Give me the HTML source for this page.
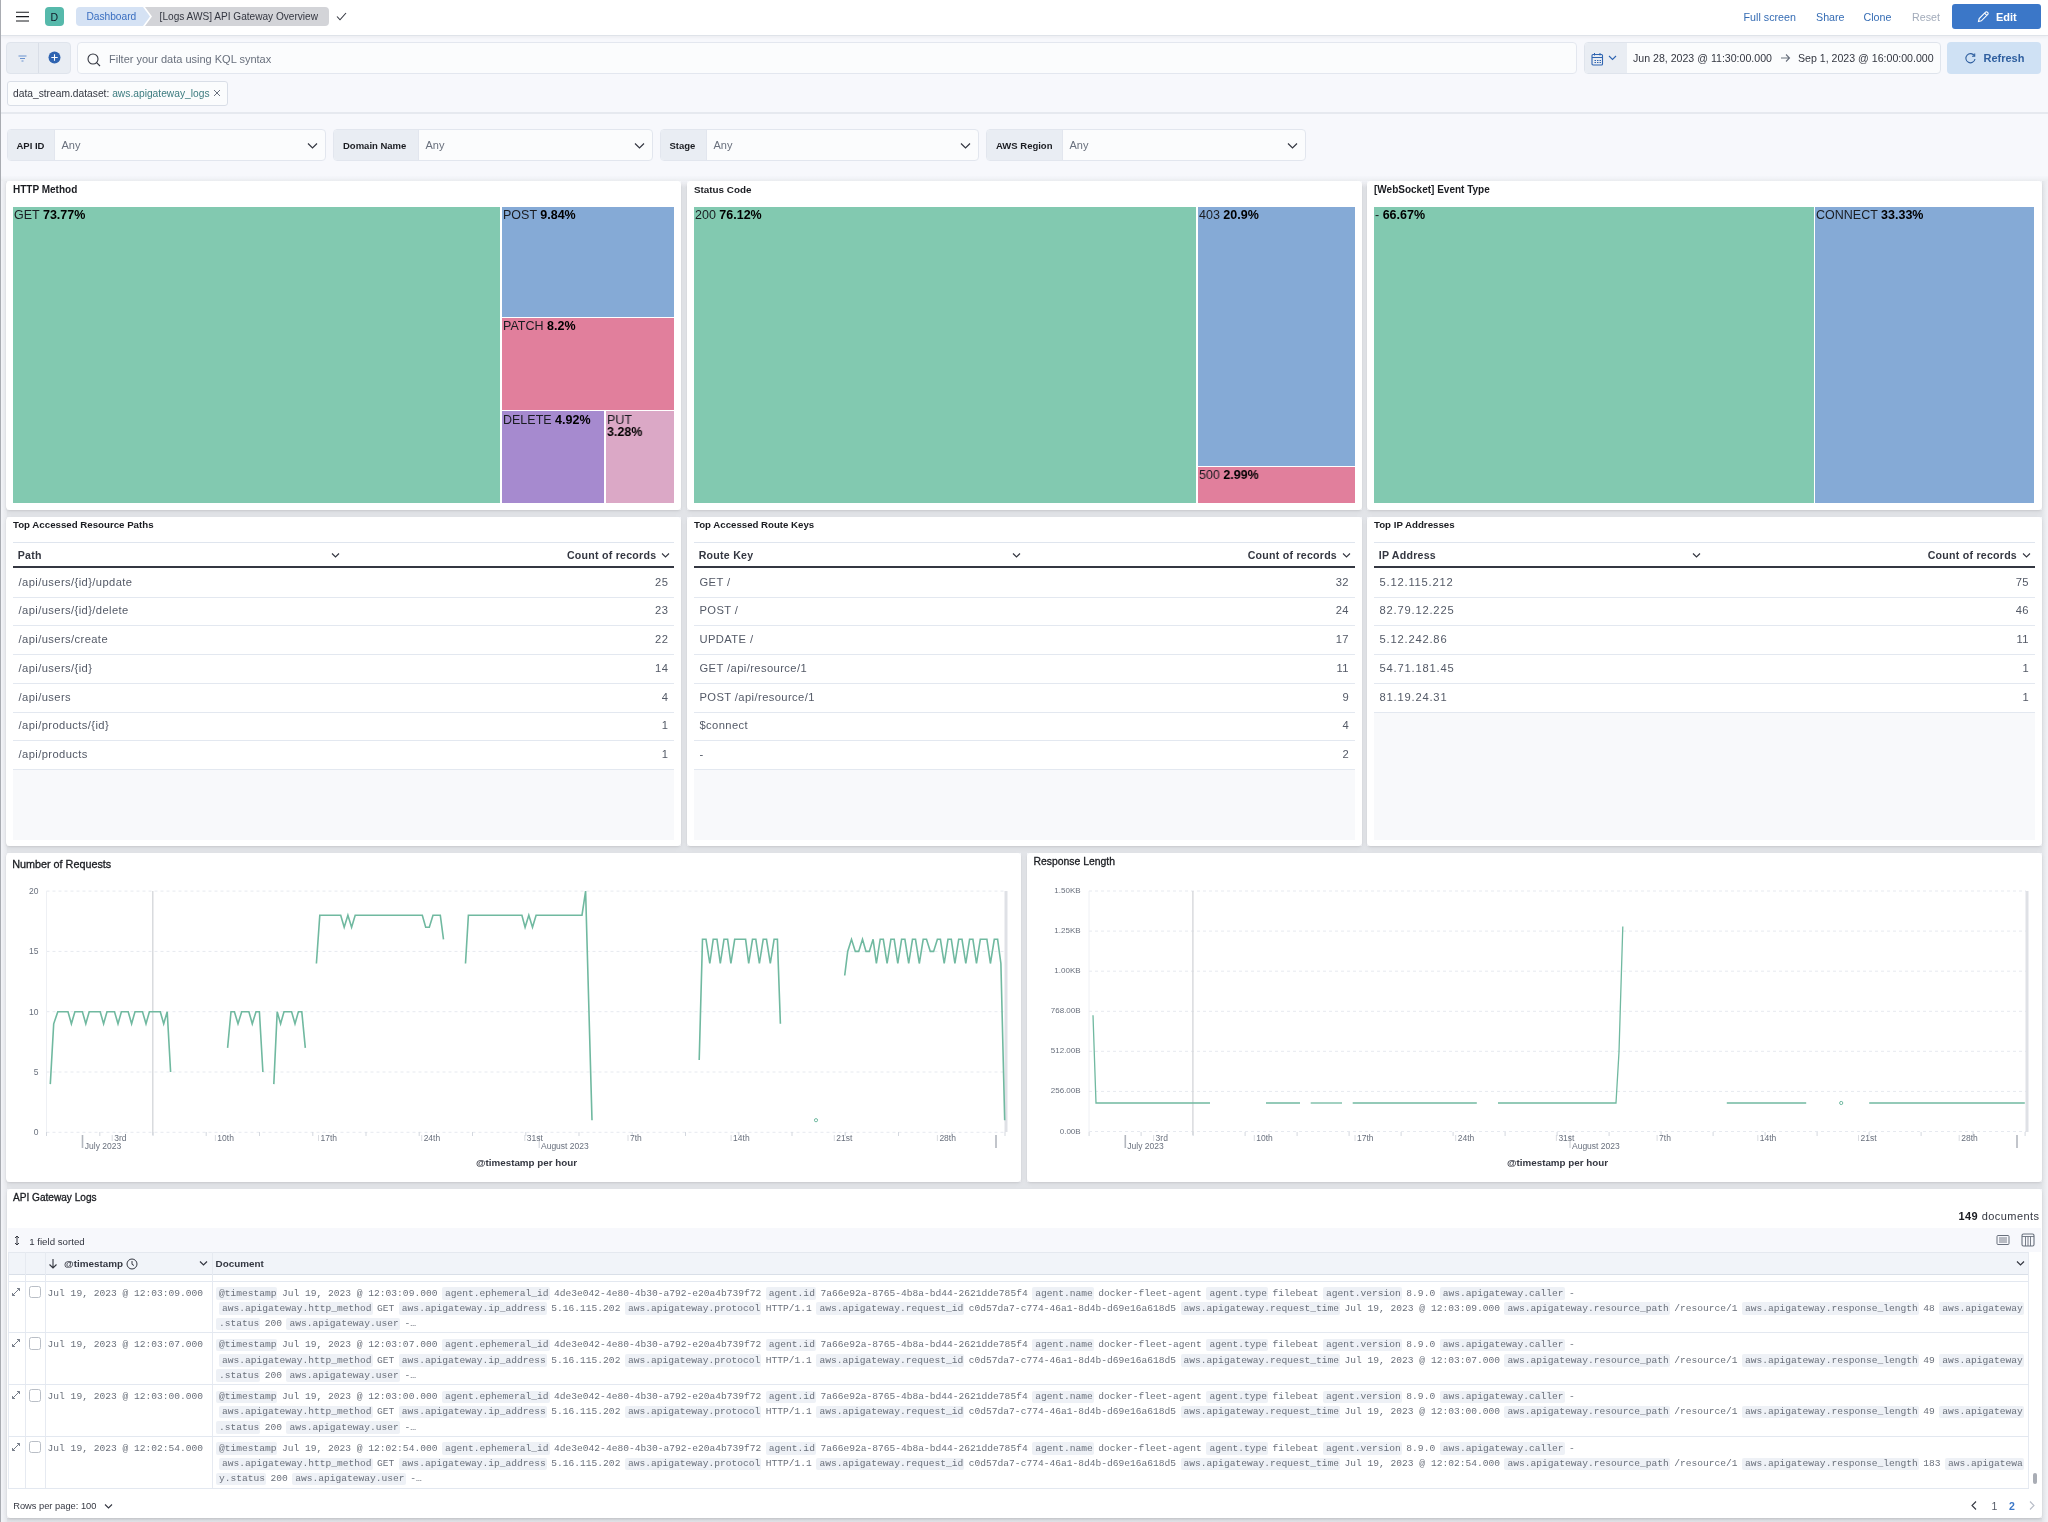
<!DOCTYPE html><html><head><meta charset="utf-8"><style>
*{box-sizing:border-box;margin:0;padding:0}
html,body{width:2048px;height:1522px;overflow:hidden;-webkit-font-smoothing:antialiased;background:#f7f8fc;font-family:"Liberation Sans",sans-serif;color:#343741}
.a{position:absolute}
.t{position:absolute;white-space:nowrap;line-height:1}
.lb{left:0;top:0;width:1px;height:1522px;background:#a9acb2;z-index:50}
.hdr{left:0;top:0;width:2048px;height:35px;background:#fff;box-shadow:0 1px 0 #dfe3e9,0 2px 4px rgba(0,0,0,.06)}
.panel{position:absolute;background:#fff;border-radius:4px;box-shadow:0 1px 2px rgba(0,0,0,.07),0 2px 5px rgba(0,0,0,.05)}
.ptitle{font-weight:bold;font-size:10px;color:#1a1c21}
.link{color:#356cb4;font-size:10.7px}
.ctl{position:absolute;top:129px;height:32px;border:1px solid #e2e6ee;border-radius:4px;background:#fbfcfd;overflow:hidden}
.ctl .lab{position:absolute;left:0;top:0;bottom:0;background:#e9edf3;border-right:1px solid #e2e6ee}
.ctl .lab span{position:absolute;top:10.8px;font-weight:bold;font-size:9.5px;color:#1a1c21;white-space:nowrap;line-height:1}
.ctl .any{position:absolute;top:9.5px;font-size:11px;color:#69707d;line-height:1}
.ctl svg{position:absolute;top:12px}
.tm{position:absolute;overflow:hidden}
.tm span{position:absolute;left:1px;top:2.4px;font-size:13.5px;color:#1a1c21;white-space:nowrap;line-height:12.3px;transform:scaleX(.926);transform-origin:0 0}
.tm b{font-weight:bold;color:#000}

.doc{position:absolute;left:215.9px;font-family:"Liberation Mono",monospace;font-size:9.6px;color:#6a707b;white-space:pre;line-height:1}
.doc span{display:inline-block;margin-right:4.5px;padding:1.5px 0 1.5px 0}
.doc span.f{background:#eef1f6;padding:1.5px 1px 1.5px 3px;border-radius:2px}
.ts{position:absolute;left:47.6px;font-family:"Liberation Mono",monospace;font-size:9.6px;color:#6a707b;white-space:pre;line-height:1}
</style></head><body><div style="position:absolute;left:0;top:0;width:2048px;height:1522px;will-change:transform"><div class="a lb"></div>
<div class="a hdr"></div>
<svg class="a" style="left:15px;top:10px" width="16" height="14" viewBox="0 0 16 14"><path d="M1 2.2H14M1 6.6H14M1 11H14" stroke="#1a1c21" stroke-width="1.1" fill="none"/></svg>
<div class="a" style="left:45px;top:7px;width:19px;height:19px;background:#56b9ab;border-radius:4px"></div>
<div class="t" style="left:50.5px;top:12px;font-size:10.5px;color:#111827">D</div>
<svg class="a" style="left:76px;top:7px" width="256" height="19" viewBox="0 0 256 19">
<path d="M4 0H67L74 9.5L67 19H4A4 4 0 0 1 0 15V4A4 4 0 0 1 4 0Z" fill="#d5e2f4"/>
<path d="M69 0H249A4 4 0 0 1 253 4V15A4 4 0 0 1 249 19H69L76 9.5Z" fill="#d3d4d8"/>
</svg>
<div class="t" style="left:86.4px;top:12px;font-size:10.2px;color:#3b6fc1">Dashboard</div>
<div class="t" style="left:159.6px;top:12px;font-size:10.1px;color:#343741">[Logs AWS] API Gateway Overview</div>
<svg class="a" style="left:336px;top:12px" width="11" height="9" viewBox="0 0 11 9"><path d="M1 4.5L4 7.8L10 1" stroke="#343741" stroke-width="1.1" fill="none"/></svg>
<div class="t link" style="left:1743.6px;top:12px">Full screen</div>
<div class="t link" style="left:1816px;top:12px">Share</div>
<div class="t link" style="left:1863.5px;top:12px">Clone</div>
<div class="t link" style="left:1912px;top:12px;color:#a2abba">Reset</div>
<div class="a" style="left:1952px;top:4px;width:89px;height:25px;background:#3b77c8;border-radius:3px"></div>
<svg class="a" style="left:1976px;top:10px" width="14" height="14" viewBox="0 0 14 14"><path d="M2.5 11.5L3.2 8.6L9.6 2.2A1.2 1.2 0 0 1 11.3 2.2L11.8 2.7A1.2 1.2 0 0 1 11.8 4.4L5.4 10.8Z M8.6 3.2L10.8 5.4" stroke="#fff" stroke-width="1.1" fill="none"/></svg>
<div class="t" style="left:1996px;top:12px;font-size:11px;font-weight:bold;color:#fff">Edit</div>

<div class="a" style="left:6px;top:42px;width:65px;height:32px;background:#e9edf3;border-radius:4px;border:1px solid #dfe4ec"></div>
<div class="a" style="left:38px;top:43px;width:1px;height:30px;background:#d9dee7"></div>
<svg class="a" style="left:17px;top:55px" width="11" height="8" viewBox="0 0 11 8"><path d="M1.5 1H9.5M3 3.5H8M4.5 6H6.5" stroke="#6b93cf" stroke-width="1.1" fill="none"/></svg>
<svg class="a" style="left:48px;top:51px" width="13" height="13" viewBox="0 0 13 13"><circle cx="6.5" cy="6.5" r="6" fill="#2f64b1"/><path d="M6.5 3.3V9.7M3.3 6.5H9.7" stroke="#fff" stroke-width="1.1"/></svg>
<div class="a" style="left:77px;top:42px;width:1500px;height:32px;background:#fbfcfd;border:1px solid #e3e7ef;border-radius:4px"></div>
<svg class="a" style="left:86px;top:52px" width="16" height="16" viewBox="0 0 16 16"><circle cx="7" cy="7" r="5" stroke="#343741" stroke-width="1.1" fill="none"/><path d="M10.6 10.6L14 14" stroke="#343741" stroke-width="1.1"/></svg>
<div class="t" style="left:109px;top:54px;font-size:11px;color:#69707d">Filter your data using KQL syntax</div>
<div class="a" style="left:1584px;top:42px;width:357px;height:32px;background:#fbfcfd;border:1px solid #dfe4ec;border-radius:4px;overflow:hidden"><div class="a" style="left:0;top:0;width:42px;height:30px;background:#e9edf3"></div></div>
<svg class="a" style="left:1591px;top:52px" width="13" height="14" viewBox="0 0 13 14"><rect x="1" y="2.5" width="10.5" height="10.5" rx="1" stroke="#2f64b1" stroke-width="1.1" fill="none"/><path d="M1 5.5H11.5M3.5 1V3.5M9 1V3.5M3.5 8.5H5M6 8.5H7.5M8.5 8.5H10M3.5 10.5H5M6 10.5H7.5M8.5 10.5H10" stroke="#2f64b1" stroke-width="1"/></svg>
<svg class="a" style="left:1608px;top:55px" width="9" height="6" viewBox="0 0 9 6"><path d="M1 1L4.5 4.5L8 1" stroke="#2f64b1" stroke-width="1.1" fill="none"/></svg>
<div class="t" style="left:1633px;top:52.5px;font-size:10.6px;color:#343741">Jun 28, 2023 @ 11:30:00.000</div>
<svg class="a" style="left:1780px;top:53px" width="11" height="10" viewBox="0 0 11 10"><path d="M1 5H9.5M6 1.5L9.5 5L6 8.5" stroke="#69707d" stroke-width="1.1" fill="none"/></svg>
<div class="t" style="left:1798px;top:52.5px;font-size:10.6px;color:#343741">Sep 1, 2023 @ 16:00:00.000</div>
<div class="a" style="left:1947px;top:42px;width:94px;height:32px;background:#cfe1f4;border-radius:4px"></div>
<svg class="a" style="left:1964px;top:52px" width="13" height="13" viewBox="0 0 13 13"><path d="M10.5 4A4.6 4.6 0 1 0 11 7" stroke="#2f5f9f" stroke-width="1.1" fill="none"/><path d="M10.7 1.5V4.3H8" stroke="#2f5f9f" stroke-width="1.1" fill="none"/></svg>
<div class="t" style="left:1983.5px;top:53px;font-size:11px;font-weight:bold;color:#2f5f9f">Refresh</div>
<div class="a" style="left:7px;top:81px;width:221px;height:25px;background:#fbfcfd;border:1px solid #d9dee7;border-radius:3px"></div>
<div class="t" style="left:13px;top:88.7px;font-size:10.25px;color:#343741">data_stream.dataset: <span style="color:#3d7c80">aws.apigateway_logs</span></div>
<svg class="a" style="left:213px;top:89px" width="8" height="8" viewBox="0 0 8 8"><path d="M1 1L7 7M7 1L1 7" stroke="#69707d" stroke-width="1"/></svg>
<div class="a" style="left:1px;top:112px;width:2047px;height:2px;background:#e6e9ef"></div>
<div class="ctl" style="left:6.5px;width:319.5px"><div class="lab" style="width:47.5px"><span style="left:9px">API ID</span></div><div class="any" style="left:54.0px">Any</div><svg style="left:299.5px" width="11" height="8" viewBox="0 0 11 8"><path d="M1 1.5L5.5 6L10 1.5" stroke="#343741" stroke-width="1.2" fill="none"/></svg></div><div class="ctl" style="left:333px;width:319.5px"><div class="lab" style="width:85px"><span style="left:9px">Domain Name</span></div><div class="any" style="left:91.5px">Any</div><svg style="left:299.5px" width="11" height="8" viewBox="0 0 11 8"><path d="M1 1.5L5.5 6L10 1.5" stroke="#343741" stroke-width="1.2" fill="none"/></svg></div><div class="ctl" style="left:659.5px;width:319.5px"><div class="lab" style="width:46.5px"><span style="left:9px">Stage</span></div><div class="any" style="left:53.0px">Any</div><svg style="left:299.5px" width="11" height="8" viewBox="0 0 11 8"><path d="M1 1.5L5.5 6L10 1.5" stroke="#343741" stroke-width="1.2" fill="none"/></svg></div><div class="ctl" style="left:986px;width:319.5px"><div class="lab" style="width:76px"><span style="left:9px">AWS Region</span></div><div class="any" style="left:82.5px">Any</div><svg style="left:299.5px" width="11" height="8" viewBox="0 0 11 8"><path d="M1 1.5L5.5 6L10 1.5" stroke="#343741" stroke-width="1.2" fill="none"/></svg></div><div class="a" style="left:6px;top:510px;width:2035.5px;height:7px;background:#e2e4e8"></div><div class="a" style="left:6px;top:846px;width:2035.5px;height:7px;background:#e2e4e8"></div><div class="a" style="left:6.5px;top:1182px;width:2035.0px;height:7px;background:#e2e4e8"></div><div class="a" style="left:680.5px;top:187px;width:6.5px;height:659px;background:#e2e4e8"></div><div class="a" style="left:1361.5px;top:187px;width:5.5px;height:659px;background:#e2e4e8"></div><div class="a" style="left:1021px;top:853px;width:6px;height:329px;background:#e2e4e8"></div><div class="a" style="left:680.5px;top:179px;width:6.5px;height:8px;background:linear-gradient(rgba(226,228,232,0),#e2e4e8)"></div><div class="a" style="left:1361.5px;top:179px;width:5.5px;height:8px;background:linear-gradient(rgba(226,228,232,0),#e2e4e8)"></div><div class="a" style="left:1px;top:176px;width:2047px;height:5px;background:linear-gradient(rgba(236,238,242,0),#eceef2)"></div><div class="a" style="left:1px;top:1517.5px;width:2047px;height:5px;background:linear-gradient(#d9dbe0,#e4e6ea)"></div><div class="a" style="left:2041.5px;top:181px;width:6.5px;height:1341px;background:linear-gradient(90deg,#e3e5e9,#f1f2f6)"></div><div class="a" style="left:1px;top:181px;width:5.5px;height:1341px;background:linear-gradient(90deg,#f3f4f8,#e6e8ec)"></div><div class="panel" style="left:6px;top:181px;width:674.5px;height:329px"></div><div class="panel" style="left:687px;top:181px;width:674.5px;height:329px"></div><div class="panel" style="left:1367px;top:181px;width:674.5px;height:329px"></div><div class="panel" style="left:6px;top:517px;width:674.5px;height:329px"></div><div class="panel" style="left:687px;top:517px;width:674.5px;height:329px"></div><div class="panel" style="left:1367px;top:517px;width:674.5px;height:329px"></div><div class="panel" style="left:6px;top:853px;width:1015px;height:329px"></div><div class="panel" style="left:1027px;top:853px;width:1014.5px;height:329px"></div><div class="panel" style="left:6.5px;top:1189px;width:2035.0px;height:328.5px"></div><div class="t ptitle" style="left:13px;top:185px">HTTP Method</div><div class="t ptitle" style="left:694px;top:185px;font-size:9.86px">Status Code</div><div class="t ptitle" style="left:1374px;top:185px">[WebSocket] Event Type</div><div class="t ptitle" style="left:13px;top:520.4px;font-size:9.7px">Top Accessed Resource Paths</div><div class="t ptitle" style="left:694px;top:520.4px;font-size:9.66px">Top Accessed Route Keys</div><div class="t ptitle" style="left:1374px;top:520.4px;font-size:9.7px">Top IP Addresses</div><div class="tm" style="left:13px;top:207px;width:486.7px;height:296px;background:#82c9b0"><span>GET <b>73.77%</b></span></div><div class="tm" style="left:501.6px;top:207px;width:172.39999999999998px;height:109.80000000000001px;background:#85aad6"><span>POST <b>9.84%</b></span></div><div class="tm" style="left:501.6px;top:318px;width:172.39999999999998px;height:91.60000000000002px;background:#e17f9c"><span>PATCH <b>8.2%</b></span></div><div class="tm" style="left:501.6px;top:411.3px;width:102.19999999999993px;height:91.69999999999999px;background:#a68acf"><span>DELETE <b>4.92%</b></span></div><div class="tm" style="left:605.9px;top:411.3px;width:68.10000000000002px;height:91.69999999999999px;background:#dba8c6"><span>PUT<br><b>3.28%</b></span></div><div class="tm" style="left:694px;top:207px;width:502px;height:296px;background:#82c9b0"><span>200 <b>76.12%</b></span></div><div class="tm" style="left:1198px;top:207px;width:157px;height:258.5px;background:#85aad6"><span>403 <b>20.9%</b></span></div><div class="tm" style="left:1198px;top:467px;width:157px;height:36px;background:#e17f9c"><span>500 <b>2.99%</b></span></div><div class="tm" style="left:1374px;top:207px;width:439.79999999999995px;height:296px;background:#82c9b0"><span>- <b>66.67%</b></span></div><div class="tm" style="left:1815px;top:207px;width:219.29999999999995px;height:296px;background:#85aad6"><span>CONNECT <b>33.33%</b></span></div><div class="a" style="left:13px;top:542px;width:661.3px;height:1px;background:#dfe5ee"></div><div class="t" style="left:17.7px;top:550px;font-size:10.6px;font-weight:bold;color:#343741;letter-spacing:.25px">Path</div><svg class="a" style="left:331px;top:552px" width="9" height="7" viewBox="0 0 9 7"><path d="M1 1.5L4.5 5L8 1.5" stroke="#343741" stroke-width="1.2" fill="none"/></svg><div class="t" style="right:1391.7px;top:550px;font-size:10.6px;font-weight:bold;color:#343741;letter-spacing:.25px">Count of records</div><svg class="a" style="left:661.3px;top:552px" width="9" height="7" viewBox="0 0 9 7"><path d="M1 1.5L4.5 5L8 1.5" stroke="#343741" stroke-width="1.1" fill="none"/></svg><div class="a" style="left:13px;top:565.8px;width:661.3px;height:2px;background:#343741"></div><div class="t" style="left:18.5px;top:576.5px;font-size:11.2px;color:#535966;letter-spacing:0.4px">/api/users/{id}/update</div><div class="t" style="right:1379.7px;top:576.5px;font-size:11.2px;color:#535966;letter-spacing:.4px">25</div><div class="a" style="left:13px;top:596.5px;width:661.3px;height:1px;background:#e3e8f0"></div><div class="t" style="left:18.5px;top:605.2px;font-size:11.2px;color:#535966;letter-spacing:0.4px">/api/users/{id}/delete</div><div class="t" style="right:1379.7px;top:605.2px;font-size:11.2px;color:#535966;letter-spacing:.4px">23</div><div class="a" style="left:13px;top:625.2px;width:661.3px;height:1px;background:#e3e8f0"></div><div class="t" style="left:18.5px;top:634.0px;font-size:11.2px;color:#535966;letter-spacing:0.4px">/api/users/create</div><div class="t" style="right:1379.7px;top:634.0px;font-size:11.2px;color:#535966;letter-spacing:.4px">22</div><div class="a" style="left:13px;top:654.0px;width:661.3px;height:1px;background:#e3e8f0"></div><div class="t" style="left:18.5px;top:662.8px;font-size:11.2px;color:#535966;letter-spacing:0.4px">/api/users/{id}</div><div class="t" style="right:1379.7px;top:662.8px;font-size:11.2px;color:#535966;letter-spacing:.4px">14</div><div class="a" style="left:13px;top:682.8px;width:661.3px;height:1px;background:#e3e8f0"></div><div class="t" style="left:18.5px;top:691.5px;font-size:11.2px;color:#535966;letter-spacing:0.4px">/api/users</div><div class="t" style="right:1379.7px;top:691.5px;font-size:11.2px;color:#535966;letter-spacing:.4px">4</div><div class="a" style="left:13px;top:711.5px;width:661.3px;height:1px;background:#e3e8f0"></div><div class="t" style="left:18.5px;top:720.2px;font-size:11.2px;color:#535966;letter-spacing:0.4px">/api/products/{id}</div><div class="t" style="right:1379.7px;top:720.2px;font-size:11.2px;color:#535966;letter-spacing:.4px">1</div><div class="a" style="left:13px;top:740.2px;width:661.3px;height:1px;background:#e3e8f0"></div><div class="t" style="left:18.5px;top:749.0px;font-size:11.2px;color:#535966;letter-spacing:0.4px">/api/products</div><div class="t" style="right:1379.7px;top:749.0px;font-size:11.2px;color:#535966;letter-spacing:.4px">1</div><div class="a" style="left:13px;top:769.0px;width:661.3px;height:1px;background:#e3e8f0"></div><div class="a" style="left:13px;top:770.0px;width:661.3px;height:69.8px;background:#f8f9fb"></div><div class="a" style="left:694px;top:542px;width:661px;height:1px;background:#dfe5ee"></div><div class="t" style="left:698.7px;top:550px;font-size:10.6px;font-weight:bold;color:#343741;letter-spacing:.25px">Route Key</div><svg class="a" style="left:1012px;top:552px" width="9" height="7" viewBox="0 0 9 7"><path d="M1 1.5L4.5 5L8 1.5" stroke="#343741" stroke-width="1.2" fill="none"/></svg><div class="t" style="right:711px;top:550px;font-size:10.6px;font-weight:bold;color:#343741;letter-spacing:.25px">Count of records</div><svg class="a" style="left:1342px;top:552px" width="9" height="7" viewBox="0 0 9 7"><path d="M1 1.5L4.5 5L8 1.5" stroke="#343741" stroke-width="1.1" fill="none"/></svg><div class="a" style="left:694px;top:565.8px;width:661px;height:2px;background:#343741"></div><div class="t" style="left:699.5px;top:576.5px;font-size:11.2px;color:#535966;letter-spacing:0.4px">GET /</div><div class="t" style="right:699px;top:576.5px;font-size:11.2px;color:#535966;letter-spacing:.4px">32</div><div class="a" style="left:694px;top:596.5px;width:661px;height:1px;background:#e3e8f0"></div><div class="t" style="left:699.5px;top:605.2px;font-size:11.2px;color:#535966;letter-spacing:0.4px">POST /</div><div class="t" style="right:699px;top:605.2px;font-size:11.2px;color:#535966;letter-spacing:.4px">24</div><div class="a" style="left:694px;top:625.2px;width:661px;height:1px;background:#e3e8f0"></div><div class="t" style="left:699.5px;top:634.0px;font-size:11.2px;color:#535966;letter-spacing:0.4px">UPDATE /</div><div class="t" style="right:699px;top:634.0px;font-size:11.2px;color:#535966;letter-spacing:.4px">17</div><div class="a" style="left:694px;top:654.0px;width:661px;height:1px;background:#e3e8f0"></div><div class="t" style="left:699.5px;top:662.8px;font-size:11.2px;color:#535966;letter-spacing:0.4px">GET /api/resource/1</div><div class="t" style="right:699px;top:662.8px;font-size:11.2px;color:#535966;letter-spacing:.4px">11</div><div class="a" style="left:694px;top:682.8px;width:661px;height:1px;background:#e3e8f0"></div><div class="t" style="left:699.5px;top:691.5px;font-size:11.2px;color:#535966;letter-spacing:0.4px">POST /api/resource/1</div><div class="t" style="right:699px;top:691.5px;font-size:11.2px;color:#535966;letter-spacing:.4px">9</div><div class="a" style="left:694px;top:711.5px;width:661px;height:1px;background:#e3e8f0"></div><div class="t" style="left:699.5px;top:720.2px;font-size:11.2px;color:#535966;letter-spacing:0.4px">$connect</div><div class="t" style="right:699px;top:720.2px;font-size:11.2px;color:#535966;letter-spacing:.4px">4</div><div class="a" style="left:694px;top:740.2px;width:661px;height:1px;background:#e3e8f0"></div><div class="t" style="left:699.5px;top:749.0px;font-size:11.2px;color:#535966;letter-spacing:0.4px">-</div><div class="t" style="right:699px;top:749.0px;font-size:11.2px;color:#535966;letter-spacing:.4px">2</div><div class="a" style="left:694px;top:769.0px;width:661px;height:1px;background:#e3e8f0"></div><div class="a" style="left:694px;top:770.0px;width:661px;height:69.8px;background:#f8f9fb"></div><div class="a" style="left:1374px;top:542px;width:661px;height:1px;background:#dfe5ee"></div><div class="t" style="left:1378.7px;top:550px;font-size:10.6px;font-weight:bold;color:#343741;letter-spacing:.25px">IP Address</div><svg class="a" style="left:1692px;top:552px" width="9" height="7" viewBox="0 0 9 7"><path d="M1 1.5L4.5 5L8 1.5" stroke="#343741" stroke-width="1.2" fill="none"/></svg><div class="t" style="right:31px;top:550px;font-size:10.6px;font-weight:bold;color:#343741;letter-spacing:.25px">Count of records</div><svg class="a" style="left:2022px;top:552px" width="9" height="7" viewBox="0 0 9 7"><path d="M1 1.5L4.5 5L8 1.5" stroke="#343741" stroke-width="1.1" fill="none"/></svg><div class="a" style="left:1374px;top:565.8px;width:661px;height:2px;background:#343741"></div><div class="t" style="left:1379.5px;top:576.5px;font-size:11.2px;color:#535966;letter-spacing:0.8px">5.12.115.212</div><div class="t" style="right:19px;top:576.5px;font-size:11.2px;color:#535966;letter-spacing:.4px">75</div><div class="a" style="left:1374px;top:596.5px;width:661px;height:1px;background:#e3e8f0"></div><div class="t" style="left:1379.5px;top:605.2px;font-size:11.2px;color:#535966;letter-spacing:0.8px">82.79.12.225</div><div class="t" style="right:19px;top:605.2px;font-size:11.2px;color:#535966;letter-spacing:.4px">46</div><div class="a" style="left:1374px;top:625.2px;width:661px;height:1px;background:#e3e8f0"></div><div class="t" style="left:1379.5px;top:634.0px;font-size:11.2px;color:#535966;letter-spacing:0.8px">5.12.242.86</div><div class="t" style="right:19px;top:634.0px;font-size:11.2px;color:#535966;letter-spacing:.4px">11</div><div class="a" style="left:1374px;top:654.0px;width:661px;height:1px;background:#e3e8f0"></div><div class="t" style="left:1379.5px;top:662.8px;font-size:11.2px;color:#535966;letter-spacing:0.8px">54.71.181.45</div><div class="t" style="right:19px;top:662.8px;font-size:11.2px;color:#535966;letter-spacing:.4px">1</div><div class="a" style="left:1374px;top:682.8px;width:661px;height:1px;background:#e3e8f0"></div><div class="t" style="left:1379.5px;top:691.5px;font-size:11.2px;color:#535966;letter-spacing:0.8px">81.19.24.31</div><div class="t" style="right:19px;top:691.5px;font-size:11.2px;color:#535966;letter-spacing:.4px">1</div><div class="a" style="left:1374px;top:711.5px;width:661px;height:1px;background:#e3e8f0"></div><div class="a" style="left:1374px;top:712.5px;width:661px;height:127.3px;background:#f8f9fb"></div><svg class="a" style="left:0;top:0" width="2048" height="1522" viewBox="0 0 2048 1522"><line x1="46.5" y1="891.1" x2="1005" y2="891.1" stroke="#e6e9ef" stroke-width="1" stroke-dasharray="3,3"/><line x1="46.5" y1="951.4" x2="1005" y2="951.4" stroke="#e6e9ef" stroke-width="1" stroke-dasharray="3,3"/><line x1="46.5" y1="1011.7" x2="1005" y2="1011.7" stroke="#e6e9ef" stroke-width="1" stroke-dasharray="3,3"/><line x1="46.5" y1="1072.0" x2="1005" y2="1072.0" stroke="#e6e9ef" stroke-width="1" stroke-dasharray="3,3"/><line x1="46.5" y1="1132.3" x2="1005" y2="1132.3" stroke="#e6e9ef" stroke-width="1" stroke-dasharray="3,3"/><line x1="46.5" y1="891" x2="46.5" y2="1132" stroke="#eef0f4" stroke-width="1"/><line x1="152.8" y1="891" x2="152.8" y2="1135" stroke="#d3d5d9" stroke-width="1.3"/><line x1="1006" y1="891" x2="1006" y2="1132" stroke="#dfe1e6" stroke-width="3"/><polyline points="50.3,1084.1 53.7,1023.8 57.8,1011.7 68.0,1011.7 71.4,1023.8 74.9,1011.7 82.4,1011.7 85.8,1023.8 89.2,1011.7 100.2,1011.7 103.6,1023.8 107.0,1011.7 114.5,1011.7 118.0,1023.8 121.4,1011.7 128.2,1011.7 131.6,1023.8 135.0,1011.7 142.5,1011.7 146.0,1023.8 149.4,1011.7 160.3,1011.7 163.7,1023.8 167.2,1011.7 170.6,1072.0" fill="none" stroke="#70b9a0" stroke-width="1.6" stroke-linejoin="miter"/><polyline points="227.6,1047.9 231.0,1011.7 234.4,1011.7 238.0,1023.8 241.7,1011.7 248.9,1011.7 252.3,1023.8 256.0,1011.7 259.4,1011.7 262.9,1072.0" fill="none" stroke="#70b9a0" stroke-width="1.6" stroke-linejoin="miter"/><polyline points="273.8,1084.1 277.2,1011.7 280.6,1023.8 284.0,1011.7 291.6,1011.7 295.0,1023.8 298.4,1011.7 301.8,1011.7 305.3,1047.9" fill="none" stroke="#70b9a0" stroke-width="1.6" stroke-linejoin="miter"/><polyline points="316.4,963.5 319.8,915.2 340.7,915.2 344.2,927.3 347.9,915.2 351.6,927.3 355.2,915.2 422.3,915.2 425.7,927.3 429.3,927.3 433.0,915.2 440.3,915.2 443.5,939.3" fill="none" stroke="#70b9a0" stroke-width="1.6" stroke-linejoin="miter"/><polyline points="465.5,963.5 468.4,915.2 521.9,915.2 525.1,927.3 528.8,915.2 532.5,927.3 536.1,915.2 582.0,915.2 585.6,891.1 592.0,1120.2" fill="none" stroke="#70b9a0" stroke-width="1.6" stroke-linejoin="miter"/><polyline points="699.2,1059.9 702.5,939.3 706.0,939.3 709.8,963.5 713.2,939.3 717.0,939.3 720.3,963.5 724.0,939.3 727.6,939.3 730.9,963.5 734.7,939.3 745.6,939.3 748.7,963.5 752.5,939.3 755.8,939.3 759.4,963.5 763.2,939.3 766.5,939.3 770.3,963.5 774.1,939.3 777.4,939.3 780.4,1023.8" fill="none" stroke="#70b9a0" stroke-width="1.6" stroke-linejoin="miter"/><polyline points="844.7,975.5 847.7,951.4 851.5,939.3 855.3,951.4 858.7,951.4 862.5,939.3 866.0,951.4 869.3,951.4 873.1,939.3 876.4,963.5 880.2,939.3 883.3,939.3 887.1,963.5 890.9,939.3 894.2,939.3 897.8,963.5 901.6,939.3 904.9,939.3 908.7,963.5 912.5,939.3 915.5,939.3 919.3,963.5 923.2,939.3 926.5,939.3 930.3,951.4 933.6,951.4 937.4,939.3 940.4,939.3 944.2,963.5 948.0,939.3 951.3,939.3 954.9,963.5 958.7,939.3 962.0,939.3 965.8,963.5 969.6,939.3 972.9,939.3 976.5,963.5 980.3,939.3 986.9,939.3 990.4,963.5 994.3,939.3 997.6,939.3 1000.9,963.5 1004.7,1120.2" fill="none" stroke="#70b9a0" stroke-width="1.6" stroke-linejoin="miter"/><circle cx="816" cy="1120.2" r="1.6" fill="#fff" stroke="#70b9a0" stroke-width="1"/><line x1="112.2" y1="1135" x2="112.2" y2="1141" stroke="#d0d3d9" stroke-width="0.8"/><line x1="215.4" y1="1135" x2="215.4" y2="1141" stroke="#d0d3d9" stroke-width="0.8"/><line x1="318.5" y1="1135" x2="318.5" y2="1141" stroke="#d0d3d9" stroke-width="0.8"/><line x1="421.7" y1="1135" x2="421.7" y2="1141" stroke="#d0d3d9" stroke-width="0.8"/><line x1="524.8" y1="1135" x2="524.8" y2="1141" stroke="#d0d3d9" stroke-width="0.8"/><line x1="628.0" y1="1135" x2="628.0" y2="1141" stroke="#d0d3d9" stroke-width="0.8"/><line x1="731.1" y1="1135" x2="731.1" y2="1141" stroke="#d0d3d9" stroke-width="0.8"/><line x1="834.3" y1="1135" x2="834.3" y2="1141" stroke="#d0d3d9" stroke-width="0.8"/><line x1="937.4" y1="1135" x2="937.4" y2="1141" stroke="#d0d3d9" stroke-width="0.8"/><line x1="46.5" y1="1132" x2="46.5" y2="1136" stroke="#d3d7de" stroke-width="1"/><line x1="99.8" y1="1132" x2="99.8" y2="1136" stroke="#d3d7de" stroke-width="1"/><line x1="153.0" y1="1132" x2="153.0" y2="1136" stroke="#d3d7de" stroke-width="1"/><line x1="206.2" y1="1132" x2="206.2" y2="1136" stroke="#d3d7de" stroke-width="1"/><line x1="259.5" y1="1132" x2="259.5" y2="1136" stroke="#d3d7de" stroke-width="1"/><line x1="312.8" y1="1132" x2="312.8" y2="1136" stroke="#d3d7de" stroke-width="1"/><line x1="366.0" y1="1132" x2="366.0" y2="1136" stroke="#d3d7de" stroke-width="1"/><line x1="419.2" y1="1132" x2="419.2" y2="1136" stroke="#d3d7de" stroke-width="1"/><line x1="472.5" y1="1132" x2="472.5" y2="1136" stroke="#d3d7de" stroke-width="1"/><line x1="525.8" y1="1132" x2="525.8" y2="1136" stroke="#d3d7de" stroke-width="1"/><line x1="579.0" y1="1132" x2="579.0" y2="1136" stroke="#d3d7de" stroke-width="1"/><line x1="632.2" y1="1132" x2="632.2" y2="1136" stroke="#d3d7de" stroke-width="1"/><line x1="685.5" y1="1132" x2="685.5" y2="1136" stroke="#d3d7de" stroke-width="1"/><line x1="738.8" y1="1132" x2="738.8" y2="1136" stroke="#d3d7de" stroke-width="1"/><line x1="792.0" y1="1132" x2="792.0" y2="1136" stroke="#d3d7de" stroke-width="1"/><line x1="845.2" y1="1132" x2="845.2" y2="1136" stroke="#d3d7de" stroke-width="1"/><line x1="898.5" y1="1132" x2="898.5" y2="1136" stroke="#d3d7de" stroke-width="1"/><line x1="951.8" y1="1132" x2="951.8" y2="1136" stroke="#d3d7de" stroke-width="1"/><line x1="1005.0" y1="1132" x2="1005.0" y2="1136" stroke="#d3d7de" stroke-width="1"/><line x1="82.5" y1="1135" x2="82.5" y2="1148" stroke="#b3b7be" stroke-width="1.6"/><line x1="539.2" y1="1135" x2="539.2" y2="1148" stroke="#c4c8cf" stroke-width="0.8"/><line x1="996" y1="1135" x2="996" y2="1148" stroke="#b3b7be" stroke-width="1.6"/><line x1="1089" y1="1131.5" x2="2026" y2="1131.5" stroke="#e6e9ef" stroke-width="1" stroke-dasharray="3,3"/><line x1="1089" y1="1091.4" x2="2026" y2="1091.4" stroke="#e6e9ef" stroke-width="1" stroke-dasharray="3,3"/><line x1="1089" y1="1051.3" x2="2026" y2="1051.3" stroke="#e6e9ef" stroke-width="1" stroke-dasharray="3,3"/><line x1="1089" y1="1011.3" x2="2026" y2="1011.3" stroke="#e6e9ef" stroke-width="1" stroke-dasharray="3,3"/><line x1="1089" y1="971.2" x2="2026" y2="971.2" stroke="#e6e9ef" stroke-width="1" stroke-dasharray="3,3"/><line x1="1089" y1="931.1" x2="2026" y2="931.1" stroke="#e6e9ef" stroke-width="1" stroke-dasharray="3,3"/><line x1="1089" y1="891.0" x2="2026" y2="891.0" stroke="#e6e9ef" stroke-width="1" stroke-dasharray="3,3"/><line x1="1089" y1="891" x2="1089" y2="1132" stroke="#eef0f4" stroke-width="1"/><line x1="1192.9" y1="891" x2="1192.9" y2="1135" stroke="#d3d5d9" stroke-width="1.3"/><line x1="2027" y1="891" x2="2027" y2="1132" stroke="#dfe1e6" stroke-width="3"/><polyline points="1093.0,1015.2 1096.0,1103.0 1210.0,1103.0" fill="none" stroke="#70b9a0" stroke-width="1.3"/><polyline points="1266.0,1103.0 1300.0,1103.0" fill="none" stroke="#70b9a0" stroke-width="1.3"/><polyline points="1310.7,1103.0 1342.0,1103.0" fill="none" stroke="#70b9a0" stroke-width="1.3"/><polyline points="1352.7,1103.0 1476.8,1103.0" fill="none" stroke="#70b9a0" stroke-width="1.3"/><polyline points="1498.0,1103.0 1616.0,1103.0 1619.0,1052.0 1622.8,926.4" fill="none" stroke="#70b9a0" stroke-width="1.3"/><polyline points="1726.8,1103.0 1806.2,1103.0" fill="none" stroke="#70b9a0" stroke-width="1.3"/><polyline points="1869.2,1103.0 2024.8,1103.0" fill="none" stroke="#70b9a0" stroke-width="1.3"/><circle cx="1841.2" cy="1103" r="1.6" fill="#fff" stroke="#70b9a0" stroke-width="1"/><line x1="1153.6" y1="1135" x2="1153.6" y2="1141" stroke="#d0d3d9" stroke-width="0.8"/><line x1="1254.3" y1="1135" x2="1254.3" y2="1141" stroke="#d0d3d9" stroke-width="0.8"/><line x1="1355.0" y1="1135" x2="1355.0" y2="1141" stroke="#d0d3d9" stroke-width="0.8"/><line x1="1455.7" y1="1135" x2="1455.7" y2="1141" stroke="#d0d3d9" stroke-width="0.8"/><line x1="1556.4" y1="1135" x2="1556.4" y2="1141" stroke="#d0d3d9" stroke-width="0.8"/><line x1="1657.1" y1="1135" x2="1657.1" y2="1141" stroke="#d0d3d9" stroke-width="0.8"/><line x1="1757.8" y1="1135" x2="1757.8" y2="1141" stroke="#d0d3d9" stroke-width="0.8"/><line x1="1858.5" y1="1135" x2="1858.5" y2="1141" stroke="#d0d3d9" stroke-width="0.8"/><line x1="1959.2" y1="1135" x2="1959.2" y2="1141" stroke="#d0d3d9" stroke-width="0.8"/><line x1="1089.1" y1="1132" x2="1089.1" y2="1136" stroke="#d3d7de" stroke-width="1"/><line x1="1141.1" y1="1132" x2="1141.1" y2="1136" stroke="#d3d7de" stroke-width="1"/><line x1="1193.1" y1="1132" x2="1193.1" y2="1136" stroke="#d3d7de" stroke-width="1"/><line x1="1245.1" y1="1132" x2="1245.1" y2="1136" stroke="#d3d7de" stroke-width="1"/><line x1="1297.1" y1="1132" x2="1297.1" y2="1136" stroke="#d3d7de" stroke-width="1"/><line x1="1349.1" y1="1132" x2="1349.1" y2="1136" stroke="#d3d7de" stroke-width="1"/><line x1="1401.1" y1="1132" x2="1401.1" y2="1136" stroke="#d3d7de" stroke-width="1"/><line x1="1453.1" y1="1132" x2="1453.1" y2="1136" stroke="#d3d7de" stroke-width="1"/><line x1="1505.1" y1="1132" x2="1505.1" y2="1136" stroke="#d3d7de" stroke-width="1"/><line x1="1557.1" y1="1132" x2="1557.1" y2="1136" stroke="#d3d7de" stroke-width="1"/><line x1="1609.1" y1="1132" x2="1609.1" y2="1136" stroke="#d3d7de" stroke-width="1"/><line x1="1661.1" y1="1132" x2="1661.1" y2="1136" stroke="#d3d7de" stroke-width="1"/><line x1="1713.1" y1="1132" x2="1713.1" y2="1136" stroke="#d3d7de" stroke-width="1"/><line x1="1765.1" y1="1132" x2="1765.1" y2="1136" stroke="#d3d7de" stroke-width="1"/><line x1="1817.1" y1="1132" x2="1817.1" y2="1136" stroke="#d3d7de" stroke-width="1"/><line x1="1869.1" y1="1132" x2="1869.1" y2="1136" stroke="#d3d7de" stroke-width="1"/><line x1="1921.1" y1="1132" x2="1921.1" y2="1136" stroke="#d3d7de" stroke-width="1"/><line x1="1973.1" y1="1132" x2="1973.1" y2="1136" stroke="#d3d7de" stroke-width="1"/><line x1="2025.1" y1="1132" x2="2025.1" y2="1136" stroke="#d3d7de" stroke-width="1"/><line x1="1125.3" y1="1135" x2="1125.3" y2="1148" stroke="#b3b7be" stroke-width="1.6"/><line x1="1570" y1="1135" x2="1570" y2="1148" stroke="#b8bcc4" stroke-width="0.8"/><line x1="2017" y1="1135" x2="2017" y2="1148" stroke="#b3b7be" stroke-width="1.6"/></svg><div class="t" style="left:12.2px;top:859px;font-size:10.8px;color:#1a1c21;-webkit-text-stroke:.3px #1a1c21">Number of Requests</div><div class="t" style="left:1033.5px;top:857px;font-size:10.4px;color:#1a1c21;-webkit-text-stroke:.3px #1a1c21">Response Length</div><div class="t" style="right:2009.5px;top:887.0999999999999px;font-size:8.5px;color:#69707d;">20</div><div class="t" style="right:2009.5px;top:947.4px;font-size:8.5px;color:#69707d;">15</div><div class="t" style="right:2009.5px;top:1007.6999999999999px;font-size:8.5px;color:#69707d;">10</div><div class="t" style="right:2009.5px;top:1068.0px;font-size:8.5px;color:#69707d;">5</div><div class="t" style="right:2009.5px;top:1128.3px;font-size:8.5px;color:#69707d;">0</div><div class="t" style="right:967.4000000000001px;top:1127.5px;font-size:8px;color:#69707d;">0.00B</div><div class="t" style="right:967.4000000000001px;top:1087.42px;font-size:8px;color:#69707d;">256.00B</div><div class="t" style="right:967.4000000000001px;top:1047.34px;font-size:8px;color:#69707d;">512.00B</div><div class="t" style="right:967.4000000000001px;top:1007.26px;font-size:8px;color:#69707d;">768.00B</div><div class="t" style="right:967.4000000000001px;top:967.1800000000001px;font-size:8px;color:#69707d;">1.00KB</div><div class="t" style="right:967.4000000000001px;top:927.1px;font-size:8px;color:#69707d;">1.25KB</div><div class="t" style="right:967.4000000000001px;top:887.02px;font-size:8px;color:#69707d;">1.50KB</div><div class="t" style="left:114.2px;top:1134px;font-size:8.5px;color:#69707d;">3rd</div><div class="t" style="left:217.35000000000002px;top:1134px;font-size:8.5px;color:#69707d;">10th</div><div class="t" style="left:320.5px;top:1134px;font-size:8.5px;color:#69707d;">17th</div><div class="t" style="left:423.65000000000003px;top:1134px;font-size:8.5px;color:#69707d;">24th</div><div class="t" style="left:526.8000000000001px;top:1134px;font-size:8.5px;color:#69707d;">31st</div><div class="t" style="left:629.95px;top:1134px;font-size:8.5px;color:#69707d;">7th</div><div class="t" style="left:733.1000000000001px;top:1134px;font-size:8.5px;color:#69707d;">14th</div><div class="t" style="left:836.2500000000001px;top:1134px;font-size:8.5px;color:#69707d;">21st</div><div class="t" style="left:939.4000000000001px;top:1134px;font-size:8.5px;color:#69707d;">28th</div><div class="t" style="left:84.8px;top:1142px;font-size:8.5px;color:#69707d;">July 2023</div><div class="t" style="left:541px;top:1142px;font-size:8.5px;color:#69707d;">August 2023</div><div class="t" style="left:1155.6px;top:1134px;font-size:8.5px;color:#69707d;">3rd</div><div class="t" style="left:1256.3px;top:1134px;font-size:8.5px;color:#69707d;">10th</div><div class="t" style="left:1357.0px;top:1134px;font-size:8.5px;color:#69707d;">17th</div><div class="t" style="left:1457.6999999999998px;top:1134px;font-size:8.5px;color:#69707d;">24th</div><div class="t" style="left:1558.3999999999999px;top:1134px;font-size:8.5px;color:#69707d;">31st</div><div class="t" style="left:1659.1px;top:1134px;font-size:8.5px;color:#69707d;">7th</div><div class="t" style="left:1759.8px;top:1134px;font-size:8.5px;color:#69707d;">14th</div><div class="t" style="left:1860.5px;top:1134px;font-size:8.5px;color:#69707d;">21st</div><div class="t" style="left:1961.1999999999998px;top:1134px;font-size:8.5px;color:#69707d;">28th</div><div class="t" style="left:1127.3px;top:1142px;font-size:8.5px;color:#69707d;">July 2023</div><div class="t" style="left:1572px;top:1142px;font-size:8.5px;color:#69707d;">August 2023</div><div class="t" style="left:476px;top:1158px;font-size:9.8px;font-weight:bold;color:#343741">@timestamp per hour</div><div class="t" style="left:1507px;top:1158px;font-size:9.8px;font-weight:bold;color:#343741">@timestamp per hour</div><div class="t ptitle" style="left:13px;top:1193px;font-size:10.1px;font-weight:normal;-webkit-text-stroke:.3px #1a1c21">API Gateway Logs</div><div class="t" style="right:8.5px;top:1210.5px;font-size:11px;letter-spacing:.45px;color:#343741"><b style="color:#1a1c21">149</b> documents</div><div class="a" style="left:7.5px;top:1228px;width:2033.5px;height:24px;background:#f7f8fc"></div><svg class="a" style="left:13px;top:1235px" width="8" height="11" viewBox="0 0 8 11"><path d="M4 1V10M2 3L4 1L6 3M2 8L4 10L6 8" stroke="#343741" stroke-width="1" fill="none"/></svg><div class="t" style="left:29.2px;top:1236.5px;font-size:9.7px;color:#343741">1 field sorted</div><svg class="a" style="left:1996px;top:1234px" width="14" height="12" viewBox="0 0 14 12"><rect x="1" y="1.5" width="12" height="9" rx="1" fill="none" stroke="#69707d" stroke-width="1"/><path d="M3 4H11M3 6H11M3 8H11" stroke="#69707d" stroke-width="0.9"/></svg><svg class="a" style="left:2021px;top:1233px" width="14" height="14" viewBox="0 0 14 14"><rect x="1" y="1" width="12" height="12" rx="1.5" fill="none" stroke="#69707d" stroke-width="1.1"/><path d="M1 3.5H13M4.5 3.5V13M7 3.5V13M9.5 3.5V13" stroke="#69707d" stroke-width="0.9"/></svg><div class="a" style="left:7.5px;top:1252px;width:2021px;height:22.5px;background:#f1f4f9;border-top:1px solid #e4e8ef"></div><div class="a" style="left:7.5px;top:1273.5px;width:2021px;height:1.5px;background:#d9dfe8"></div><div class="a" style="left:7.5px;top:1275px;width:2021px;height:6.5px;background:#fff"></div><div class="a" style="left:7.5px;top:1281px;width:2021px;height:1px;background:#e3e8f0"></div><div class="a" style="left:7.5px;top:1252px;width:1px;height:236.6px;background:#e6eaf1"></div><div class="a" style="left:24.5px;top:1252px;width:1px;height:236.6px;background:#e6eaf1"></div><div class="a" style="left:44.5px;top:1252px;width:1px;height:236.6px;background:#e6eaf1"></div><div class="a" style="left:211.5px;top:1252px;width:1px;height:236.6px;background:#e6eaf1"></div><div class="a" style="left:2028px;top:1252px;width:1px;height:236.6px;background:#e6eaf1"></div><svg class="a" style="left:48px;top:1258px" width="10" height="11" viewBox="0 0 10 11"><path d="M5 1V10M1.5 6.5L5 10L8.5 6.5" stroke="#343741" stroke-width="1.1" fill="none"/></svg><div class="t" style="left:64px;top:1259px;font-size:9.9px;font-weight:bold;color:#343741">@timestamp</div><svg class="a" style="left:125.5px;top:1257.5px" width="12" height="12" viewBox="0 0 12 12"><circle cx="6" cy="6" r="5" fill="none" stroke="#343741" stroke-width="1"/><path d="M6 3V6.3L8 7.5" stroke="#343741" stroke-width="1" fill="none"/></svg><svg class="a" style="left:199px;top:1260px" width="9" height="7" viewBox="0 0 9 7"><path d="M1 1.5L4.5 5L8 1.5" stroke="#343741" stroke-width="1.2" fill="none"/></svg><div class="t" style="left:215.5px;top:1259px;font-size:9.9px;font-weight:bold;color:#343741">Document</div><svg class="a" style="left:2016px;top:1260px" width="9" height="7" viewBox="0 0 9 7"><path d="M1 1.5L4.5 5L8 1.5" stroke="#343741" stroke-width="1.2" fill="none"/></svg><svg class="a" style="left:10.5px;top:1286.5px" width="10" height="10" viewBox="0 0 10 10"><path d="M1.5 8.5L8.5 1.5M1.5 8.5V6M1.5 8.5H4M8.5 1.5V4M8.5 1.5H6" stroke="#69707d" stroke-width="0.9" fill="none"/></svg><div class="a" style="left:28.5px;top:1285.5px;width:12.5px;height:12.5px;border:1px solid #b9bec6;border-radius:2.5px;background:#fff"></div><div class="ts" style="top:1288.5px">Jul 19, 2023 @ 12:03:09.000</div><div class="doc" style="top:1287.0px"><span class="f">@timestamp</span><span class="v">Jul 19, 2023 @ 12:03:09.000</span><span class="f">agent.ephemeral_id</span><span class="v">4de3e042-4e80-4b30-a792-e20a4b739f72</span><span class="f">agent.id</span><span class="v">7a66e92a-8765-4b8a-bd44-2621dde785f4</span><span class="f">agent.name</span><span class="v">docker-fleet-agent</span><span class="f">agent.type</span><span class="v">filebeat</span><span class="f">agent.version</span><span class="v">8.9.0</span><span class="f">aws.apigateway.caller</span><span class="v">-</span></div><div class="doc" style="top:1302.3px;padding-left:3px"><span class="f">aws.apigateway.http_method</span><span class="v">GET</span><span class="f">aws.apigateway.ip_address</span><span class="v">5.16.115.202</span><span class="f">aws.apigateway.protocol</span><span class="v">HTTP/1.1</span><span class="f">aws.apigateway.request_id</span><span class="v">c0d57da7-c774-46a1-8d4b-d69e16a618d5</span><span class="f">aws.apigateway.request_time</span><span class="v">Jul 19, 2023 @ 12:03:09.000</span><span class="f">aws.apigateway.resource_path</span><span class="v">/resource/1</span><span class="f">aws.apigateway.response_length</span><span class="v">48</span><span class="f">aws.apigateway</span></div><div class="doc" style="top:1317.5px"><span class="f">.status</span><span class="v">200</span><span class="f">aws.apigateway.user</span><span class="v">-…</span></div><div class="a" style="left:7.5px;top:1332.3px;width:2021px;height:1px;background:#e3e8f0"></div><svg class="a" style="left:10.5px;top:1338.3px" width="10" height="10" viewBox="0 0 10 10"><path d="M1.5 8.5L8.5 1.5M1.5 8.5V6M1.5 8.5H4M8.5 1.5V4M8.5 1.5H6" stroke="#69707d" stroke-width="0.9" fill="none"/></svg><div class="a" style="left:28.5px;top:1337.3px;width:12.5px;height:12.5px;border:1px solid #b9bec6;border-radius:2.5px;background:#fff"></div><div class="ts" style="top:1340.3px">Jul 19, 2023 @ 12:03:07.000</div><div class="doc" style="top:1338.8px"><span class="f">@timestamp</span><span class="v">Jul 19, 2023 @ 12:03:07.000</span><span class="f">agent.ephemeral_id</span><span class="v">4de3e042-4e80-4b30-a792-e20a4b739f72</span><span class="f">agent.id</span><span class="v">7a66e92a-8765-4b8a-bd44-2621dde785f4</span><span class="f">agent.name</span><span class="v">docker-fleet-agent</span><span class="f">agent.type</span><span class="v">filebeat</span><span class="f">agent.version</span><span class="v">8.9.0</span><span class="f">aws.apigateway.caller</span><span class="v">-</span></div><div class="doc" style="top:1354.1px;padding-left:3px"><span class="f">aws.apigateway.http_method</span><span class="v">GET</span><span class="f">aws.apigateway.ip_address</span><span class="v">5.16.115.202</span><span class="f">aws.apigateway.protocol</span><span class="v">HTTP/1.1</span><span class="f">aws.apigateway.request_id</span><span class="v">c0d57da7-c774-46a1-8d4b-d69e16a618d5</span><span class="f">aws.apigateway.request_time</span><span class="v">Jul 19, 2023 @ 12:03:07.000</span><span class="f">aws.apigateway.resource_path</span><span class="v">/resource/1</span><span class="f">aws.apigateway.response_length</span><span class="v">49</span><span class="f">aws.apigateway</span></div><div class="doc" style="top:1369.3px"><span class="f">.status</span><span class="v">200</span><span class="f">aws.apigateway.user</span><span class="v">-…</span></div><div class="a" style="left:7.5px;top:1384.1px;width:2021px;height:1px;background:#e3e8f0"></div><svg class="a" style="left:10.5px;top:1390.1px" width="10" height="10" viewBox="0 0 10 10"><path d="M1.5 8.5L8.5 1.5M1.5 8.5V6M1.5 8.5H4M8.5 1.5V4M8.5 1.5H6" stroke="#69707d" stroke-width="0.9" fill="none"/></svg><div class="a" style="left:28.5px;top:1389.1px;width:12.5px;height:12.5px;border:1px solid #b9bec6;border-radius:2.5px;background:#fff"></div><div class="ts" style="top:1392.1px">Jul 19, 2023 @ 12:03:00.000</div><div class="doc" style="top:1390.6px"><span class="f">@timestamp</span><span class="v">Jul 19, 2023 @ 12:03:00.000</span><span class="f">agent.ephemeral_id</span><span class="v">4de3e042-4e80-4b30-a792-e20a4b739f72</span><span class="f">agent.id</span><span class="v">7a66e92a-8765-4b8a-bd44-2621dde785f4</span><span class="f">agent.name</span><span class="v">docker-fleet-agent</span><span class="f">agent.type</span><span class="v">filebeat</span><span class="f">agent.version</span><span class="v">8.9.0</span><span class="f">aws.apigateway.caller</span><span class="v">-</span></div><div class="doc" style="top:1405.9px;padding-left:3px"><span class="f">aws.apigateway.http_method</span><span class="v">GET</span><span class="f">aws.apigateway.ip_address</span><span class="v">5.16.115.202</span><span class="f">aws.apigateway.protocol</span><span class="v">HTTP/1.1</span><span class="f">aws.apigateway.request_id</span><span class="v">c0d57da7-c774-46a1-8d4b-d69e16a618d5</span><span class="f">aws.apigateway.request_time</span><span class="v">Jul 19, 2023 @ 12:03:00.000</span><span class="f">aws.apigateway.resource_path</span><span class="v">/resource/1</span><span class="f">aws.apigateway.response_length</span><span class="v">49</span><span class="f">aws.apigateway</span></div><div class="doc" style="top:1421.1px"><span class="f">.status</span><span class="v">200</span><span class="f">aws.apigateway.user</span><span class="v">-…</span></div><div class="a" style="left:7.5px;top:1435.9px;width:2021px;height:1px;background:#e3e8f0"></div><svg class="a" style="left:10.5px;top:1441.9px" width="10" height="10" viewBox="0 0 10 10"><path d="M1.5 8.5L8.5 1.5M1.5 8.5V6M1.5 8.5H4M8.5 1.5V4M8.5 1.5H6" stroke="#69707d" stroke-width="0.9" fill="none"/></svg><div class="a" style="left:28.5px;top:1440.9px;width:12.5px;height:12.5px;border:1px solid #b9bec6;border-radius:2.5px;background:#fff"></div><div class="ts" style="top:1443.9px">Jul 19, 2023 @ 12:02:54.000</div><div class="doc" style="top:1442.4px"><span class="f">@timestamp</span><span class="v">Jul 19, 2023 @ 12:02:54.000</span><span class="f">agent.ephemeral_id</span><span class="v">4de3e042-4e80-4b30-a792-e20a4b739f72</span><span class="f">agent.id</span><span class="v">7a66e92a-8765-4b8a-bd44-2621dde785f4</span><span class="f">agent.name</span><span class="v">docker-fleet-agent</span><span class="f">agent.type</span><span class="v">filebeat</span><span class="f">agent.version</span><span class="v">8.9.0</span><span class="f">aws.apigateway.caller</span><span class="v">-</span></div><div class="doc" style="top:1457.7px;padding-left:3px"><span class="f">aws.apigateway.http_method</span><span class="v">GET</span><span class="f">aws.apigateway.ip_address</span><span class="v">5.16.115.202</span><span class="f">aws.apigateway.protocol</span><span class="v">HTTP/1.1</span><span class="f">aws.apigateway.request_id</span><span class="v">c0d57da7-c774-46a1-8d4b-d69e16a618d5</span><span class="f">aws.apigateway.request_time</span><span class="v">Jul 19, 2023 @ 12:02:54.000</span><span class="f">aws.apigateway.resource_path</span><span class="v">/resource/1</span><span class="f">aws.apigateway.response_length</span><span class="v">183</span><span class="f">aws.apigatewa</span></div><div class="doc" style="top:1472.9px"><span class="f">y.status</span><span class="v">200</span><span class="f">aws.apigateway.user</span><span class="v">-…</span></div><div class="a" style="left:7.5px;top:1487.7px;width:2021px;height:1px;background:#e3e8f0"></div><div class="a" style="left:2033px;top:1473px;width:3.5px;height:11px;border-radius:2px;background:#a9adb5"></div><div class="t" style="left:13.2px;top:1502px;font-size:9.3px;color:#343741">Rows per page: 100</div><svg class="a" style="left:103.5px;top:1502.5px" width="9" height="7" viewBox="0 0 9 7"><path d="M1 1.5L4.5 5L8 1.5" stroke="#343741" stroke-width="1.1" fill="none"/></svg><svg class="a" style="left:1970px;top:1500px" width="8" height="11" viewBox="0 0 8 11"><path d="M6 1.5L2 5.5L6 9.5" stroke="#343741" stroke-width="1.1" fill="none"/></svg><div class="t" style="left:1991.5px;top:1501px;font-size:10.5px;color:#535966">1</div><div class="t" style="left:2009px;top:1501px;font-size:10.5px;font-weight:bold;color:#3b77c8">2</div><svg class="a" style="left:2028px;top:1500px" width="8" height="11" viewBox="0 0 8 11"><path d="M2 1.5L6 5.5L2 9.5" stroke="#b7bcc6" stroke-width="1.1" fill="none"/></svg></div></body></html>
